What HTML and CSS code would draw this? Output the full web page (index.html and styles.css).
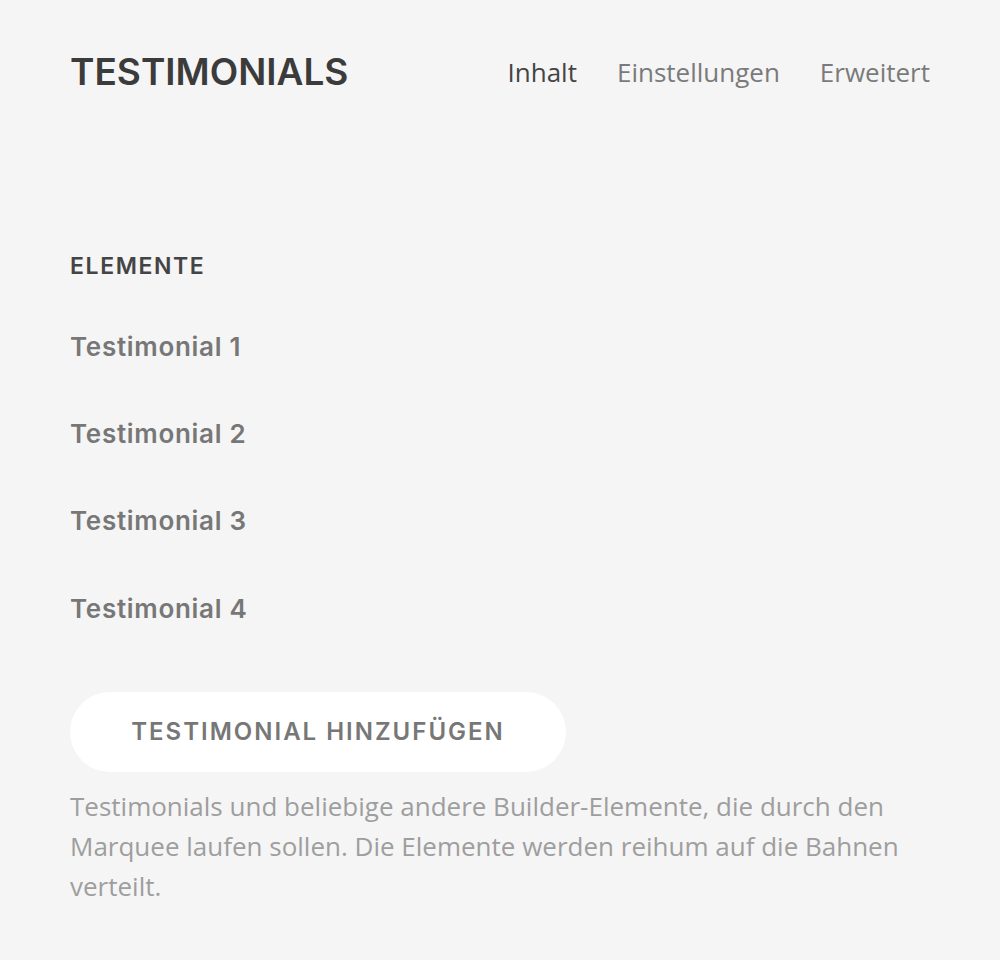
FILE: index.html
```html
<!DOCTYPE html>
<html lang="de">
<head>
<meta charset="utf-8">
<title>Testimonials</title>
<link rel="stylesheet" href="styles.css">
</head>
<body>
<div class="panel">
  <header class="header">
    <h1 class="title">TESTIMONIALS</h1>
    <nav class="tabs">
      <span class="tab active">Inhalt</span>
      <span class="tab">Einstellungen</span>
      <span class="tab">Erweitert</span>
    </nav>
  </header>
  <section class="section">
    <h2 class="label">ELEMENTE</h2>
    <ul class="items">
      <li class="item">Testimonial 1</li>
      <li class="item">Testimonial 2</li>
      <li class="item">Testimonial 3</li>
      <li class="item">Testimonial 4</li>
    </ul>
    <button class="add">TESTIMONIAL HINZUFÜGEN</button>
    <p class="desc">Testimonials und beliebige andere Builder-Elemente, die durch den Marquee laufen sollen. Die Elemente werden reihum auf die Bahnen verteilt.</p>
  </section>
</div>
</body>
</html>
```
FILE: styles.css
```css
html, body {
  margin: 0;
  padding: 0;
  background: #f5f5f5;
}
.panel {
  padding: 50px 70px 40px 70px;
  width: 860px;
}
.header {
  display: flex;
  justify-content: space-between;
  align-items: center;
  height: 44px;
}
.title {
  margin: 0;
  font-family: Inter, "Liberation Sans", sans-serif;
  font-weight: 600;
  font-size: 37px;
  line-height: 44px;
  color: #3b3b3b;
  letter-spacing: 0;
}
.tabs {
  display: flex;
  gap: 40px;
  font-family: "Open Sans", "Liberation Sans", sans-serif;
  font-size: 26px;
  line-height: 36px;
  color: #7a7a7a;
}
.tab.active {
  color: #444;
}
.section {
  margin-top: 158px;
}
.label {
  margin: 0;
  font-family: Inter, "Liberation Sans", sans-serif;
  font-weight: 600;
  font-size: 23px;
  line-height: 28px;
  color: #444;
  letter-spacing: 1.6px;
}
.items {
  list-style: none;
  margin: 23px 0 0 0;
  padding: 0;
}
.item {
  font-family: Inter, "Liberation Sans", sans-serif;
  font-weight: 600;
  font-size: 26px;
  line-height: 87.2px;
  color: #777;
  letter-spacing: 0.7px;
}
.add {
  display: block;
  margin-top: 40px;
  width: 496px;
  height: 80px;
  border: none;
  border-radius: 40px;
  background: #fff;
  font-family: Inter, "Liberation Sans", sans-serif;
  font-weight: 600;
  font-size: 24px;
  color: #777;
  letter-spacing: 2px;
  padding: 0;
}
.desc {
  margin: 14px 0 0 0;
  font-family: "Open Sans", "Liberation Sans", sans-serif;
  font-size: 26px;
  line-height: 40px;
  color: #9e9e9e;
}
```
